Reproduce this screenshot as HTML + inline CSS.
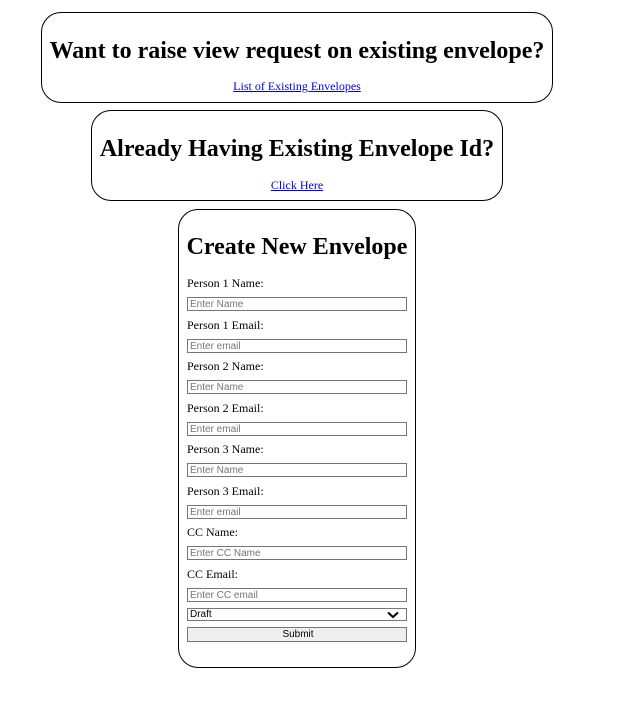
<!DOCTYPE html>
<html><head><style>
*{box-sizing:border-box;margin:0;padding:0}
body{width:622px;height:718px;background:#fff;position:relative;font-family:"Liberation Serif",serif;overflow:hidden}
.box{position:absolute;border:1px solid #000;border-radius:20px}
.h{position:absolute;left:0;right:0;text-align:center;font-weight:bold;font-size:24px;line-height:28px;white-space:nowrap}
.a{position:absolute;left:0;right:0;text-align:center;font-size:12px;line-height:14px}
.a span{color:#00e;text-decoration:underline}
.l{position:absolute;left:187px;font-size:12px;line-height:14px}
.i{position:absolute;left:187px;width:220px;height:14px;border:1px solid #767676;font-family:"Liberation Sans",sans-serif;font-size:10px;color:#757575;line-height:13px;padding-left:2px}
</style></head><body>
<div class="box" style="left:41px;top:12px;width:512px;height:91px">
<div class="h" style="top:24px">Want to raise view request on existing envelope?</div>
<div class="a" style="top:66px"><span>List of Existing Envelopes</span></div>
</div>
<div class="box" style="left:91px;top:110px;width:412px;height:91px">
<div class="h" style="top:24px">Already Having Existing Envelope Id?</div>
<div class="a" style="top:67px"><span>Click Here</span></div>
</div>
<div class="box" style="left:178px;top:209px;width:238px;height:459px"></div>
<div class="h" style="left:178px;width:238px;right:auto;top:233px">Create New Envelope</div>
<div class="l" style="top:276px">Person 1 Name:</div><div class="i" style="top:297px">Enter Name</div>
<div class="l" style="top:318px">Person 1 Email:</div><div class="i" style="top:339px">Enter email</div>
<div class="l" style="top:359px">Person 2 Name:</div><div class="i" style="top:380px">Enter Name</div>
<div class="l" style="top:401px">Person 2 Email:</div><div class="i" style="top:422px">Enter email</div>
<div class="l" style="top:442px">Person 3 Name:</div><div class="i" style="top:463px">Enter Name</div>
<div class="l" style="top:484px">Person 3 Email:</div><div class="i" style="top:505px">Enter email</div>
<div class="l" style="top:525px">CC Name:</div><div class="i" style="top:546px">Enter CC Name</div>
<div class="l" style="top:567px">CC Email:</div><div class="i" style="top:588px">Enter CC email</div>
<div class="i" style="top:608px;height:13px;color:#000;line-height:11px">Draft
<svg style="position:absolute;right:7px;top:2px" width="12" height="8" viewBox="0 0 12 8"><path d="M1 1.5L6 6L11 1.5" fill="none" stroke="#000" stroke-width="2"/></svg></div>
<div class="i" style="top:627px;height:15px;background:#efefef;color:#000;text-align:center;line-height:13px">Submit</div>
</body></html>
